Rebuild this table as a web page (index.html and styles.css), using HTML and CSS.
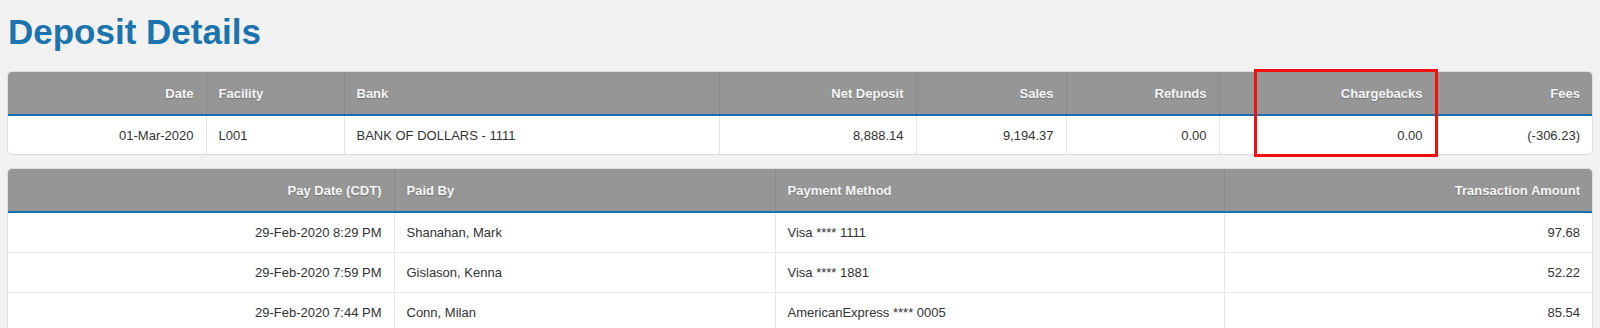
FILE: index.html
```html
<!DOCTYPE html>
<html lang="en">
<head>
<meta charset="utf-8">
<title>Deposit Details</title>
<link rel="stylesheet" href="styles.css">
</head>
<body>
<main class="page">
  <h1 class="page-title">Deposit Details</h1>

  <section class="summary-wrap">
    <div class="card">
      <table class="grid">
        <colgroup>
          <col style="width:198px"><col style="width:138px"><col style="width:375px"><col style="width:197px">
          <col style="width:150px"><col style="width:153px"><col style="width:216px"><col style="width:157px">
        </colgroup>
        <thead>
          <tr>
            <th class="r">Date</th>
            <th>Facility</th>
            <th>Bank</th>
            <th class="r">Net Deposit</th>
            <th class="r">Sales</th>
            <th class="r">Refunds</th>
            <th class="r">Chargebacks</th>
            <th class="r">Fees</th>
          </tr>
        </thead>
        <tbody>
          <tr class="summary-row">
            <td class="r">01-Mar-2020</td>
            <td>L001</td>
            <td>BANK OF DOLLARS - 1111</td>
            <td class="r">8,888.14</td>
            <td class="r">9,194.37</td>
            <td class="r">0.00</td>
            <td class="r">0.00</td>
            <td class="r">(-306.23)</td>
          </tr>
        </tbody>
      </table>
    </div>
    <div class="highlight" aria-hidden="true"></div>
  </section>

  <section class="card card-tx">
    <table class="grid">
      <colgroup>
        <col style="width:386px"><col style="width:381px"><col style="width:449px"><col style="width:368px">
      </colgroup>
      <thead>
        <tr>
          <th class="r">Pay Date (CDT)</th>
          <th>Paid By</th>
          <th>Payment Method</th>
          <th class="r">Transaction Amount</th>
        </tr>
      </thead>
      <tbody>
        <tr class="tx-row">
          <td class="r">29-Feb-2020 8:29 PM</td>
          <td>Shanahan, Mark</td>
          <td>Visa **** 1111</td>
          <td class="r">97.68</td>
        </tr>
        <tr class="tx-row">
          <td class="r">29-Feb-2020 7:59 PM</td>
          <td>Gislason, Kenna</td>
          <td>Visa **** 1881</td>
          <td class="r">52.22</td>
        </tr>
        <tr class="tx-row">
          <td class="r">29-Feb-2020 7:44 PM</td>
          <td>Conn, Milan</td>
          <td>AmericanExpress **** 0005</td>
          <td class="r">85.54</td>
        </tr>
      </tbody>
    </table>
  </section>
</main>
</body>
</html>
```

FILE: styles.css
```css
html, body {
  margin: 0;
  padding: 0;
  background: #f2f2f2;
}

body {
  font-family: "Liberation Sans", Arial, sans-serif;
  font-size: 13px;
  color: #333;
}

.page {
  padding: 8px;
}

.page-title {
  margin: 4px 0 20px;
  font-size: 35px;
  line-height: 40px;
  font-weight: bold;
  color: #1b74ae;
}

.summary-wrap {
  position: relative;
  margin-bottom: 15px;
}

.card {
  background: #fff;
  border-radius: 4px;
  overflow: hidden;
  box-shadow: 0 0 0 1px #dedede, 0 1px 1px rgba(0, 0, 0, 0.08);
}

.grid {
  width: 100%;
  table-layout: fixed;
  border-collapse: collapse;
}

.grid th {
  height: 42px;
  padding: 0 12px;
  background: #969696;
  color: #f7f7f7;
  font-weight: bold;
  text-align: left;
  text-shadow: 0 1px 1px rgba(0, 0, 0, 0.25);
  border-left: 1px solid #8a8a8a;
  border-bottom: 2px solid #1a6fae;
  white-space: nowrap;
}

.grid th:first-child {
  border-left: none;
}

.grid td {
  padding: 0 12px;
  text-align: left;
  border-left: 1px solid #e6e6e6;
  white-space: nowrap;
}

.grid td:first-child {
  border-left: none;
}

.grid .r {
  text-align: right;
}

.summary-row td {
  height: 38px;
}

.tx-row td {
  height: 39px;
  border-bottom: 1px solid #e8e8e8;
}

.highlight {
  position: absolute;
  left: 1246px;
  top: -3px;
  width: 178px;
  height: 82px;
  border: 3px solid #f01010;
  pointer-events: none;
}

.card-tx {
  border-bottom-left-radius: 0;
  border-bottom-right-radius: 0;
}
```
